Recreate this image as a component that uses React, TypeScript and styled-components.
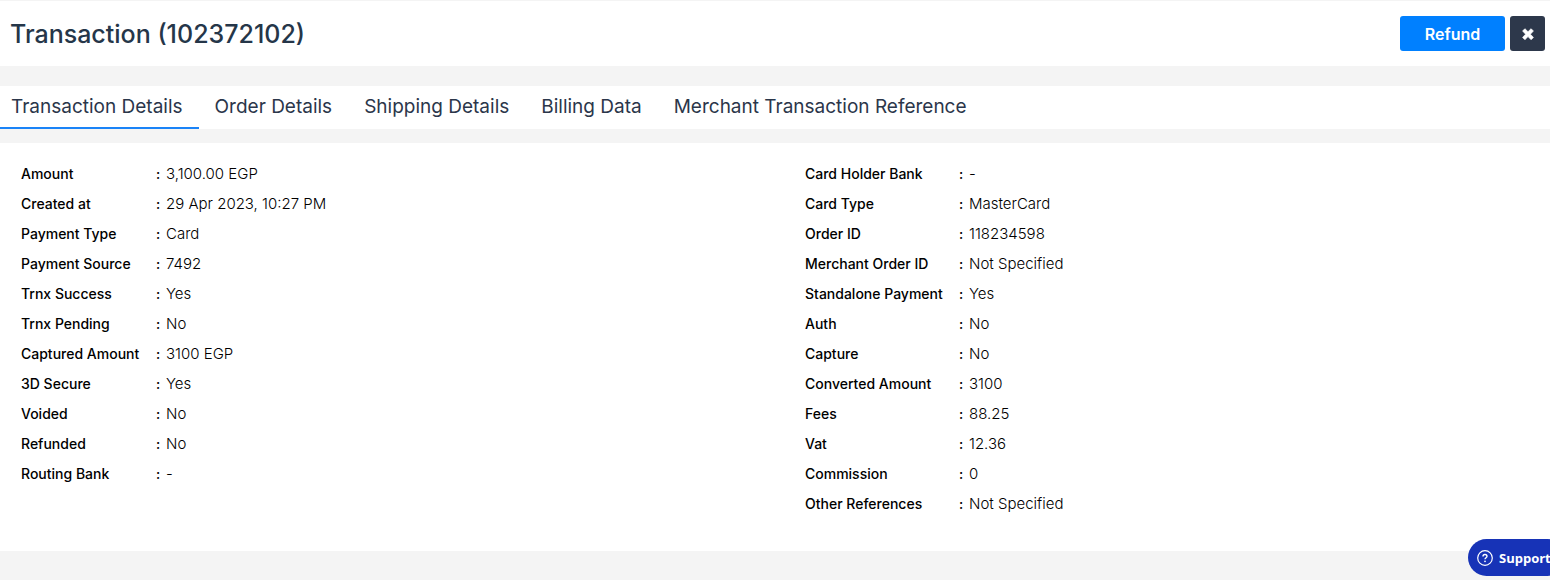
import React, { useState } from "react";
import styled, { createGlobalStyle } from "styled-components";

const GlobalStyle = createGlobalStyle`
  *, *::before, *::after { box-sizing: border-box; }
  body {
    margin: 0;
    min-height: 100vh;
    overflow-x: hidden;
    background: #f4f4f4;
    color: #000;
    font-family: Inter, "Liberation Sans", sans-serif;
  }
  button { font-family: inherit; cursor: pointer; }
`;

const Page = styled.div`
  padding-top: 1px;
`;

const Header = styled.header`
  display: flex;
  align-items: center;
  justify-content: space-between;
  height: 65px;
  padding: 0 5px 0 10px;
  background: #fff;
`;

const Title = styled.h1`
  margin: 0;
  color: #253649;
  font-size: 25px;
  font-weight: 500;
  line-height: 32px;
`;

const Actions = styled.div`
  display: flex;
  gap: 5px;
`;

const ActionButton = styled.button<{ $tone: string; $width: number }>`
  display: flex;
  align-items: center;
  justify-content: center;
  width: ${(p) => p.$width}px;
  height: 35px;
  padding: 0;
  border: 0;
  border-radius: 3px;
  background: ${(p) => p.$tone};
  color: #fff;
  font-size: 16px;
  font-weight: 600;
  line-height: 24px;
`;

const Tabs = styled.div`
  display: flex;
  height: 43px;
  margin-top: 20px;
  background: #fff;
`;

const Tab = styled.button<{ $active: boolean }>`
  padding: 0 16px;
  border: 0;
  border-bottom: 2px solid ${(p) => (p.$active ? "#1a83f7" : "transparent")};
  background: transparent;
  color: #2b364a;
  font-size: 19px;
  font-weight: 400;
  line-height: 24px;
  white-space: nowrap;

  &:first-child { padding-left: 11px; }
`;

const Panel = styled.main`
  display: grid;
  grid-template-columns: 1fr 1fr;
  align-items: start;
  column-gap: 60px;
  margin-top: 14px;
  padding: 16px 21px 32px;
  background: #fff;
`;

const DetailTable = styled.table`
  border-collapse: collapse;
  font-size: 15px;
  line-height: 20px;
  text-align: left;
`;

const Label = styled.th<{ $width: number }>`
  width: ${(p) => p.$width}px;
  height: 30px;
  padding: 0;
  font-size: 14px;
  font-weight: 500;
  white-space: nowrap;
`;

const Colon = styled.td`
  width: 10px;
  padding: 0;
  font-size: 14px;
  font-weight: 500;
`;

const Value = styled.td`
  padding: 0;
  font-weight: 300;
`;

const SupportButton = styled.button`
  position: fixed;
  right: -16px;
  bottom: 4px;
  display: flex;
  align-items: center;
  gap: 6px;
  width: 98px;
  height: 37px;
  padding: 0 0 0 9px;
  border: 0;
  border-radius: 19px;
  background: #1733b7;
  color: #fff;
  && { font-family: "Open Sans", "Noto Sans", sans-serif; }
  font-size: 13px;
  font-weight: 700;
  line-height: 20px;
`;

type Row = [string, string];

const paymentRows: Row[] = [
  ["Amount", "3,100.00 EGP"],
  ["Created at", "29 Apr 2023, 10:27 PM"],
  ["Payment Type", "Card"],
  ["Payment Source", "7492"],
  ["Trnx Success", "Yes"],
  ["Trnx Pending", "No"],
  ["Captured Amount", "3100 EGP"],
  ["3D Secure", "Yes"],
  ["Voided", "No"],
  ["Refunded", "No"],
  ["Routing Bank", "-"],
];

const orderRows: Row[] = [
  ["Card Holder Bank", "-"],
  ["Card Type", "MasterCard"],
  ["Order ID", "118234598"],
  ["Merchant Order ID", "Not Specified"],
  ["Standalone Payment", "Yes"],
  ["Auth", "No"],
  ["Capture", "No"],
  ["Converted Amount", "3100"],
  ["Fees", "88.25"],
  ["Vat", "12.36"],
  ["Commission", "0"],
  ["Other References", "Not Specified"],
];

const tabs = [
  "Transaction Details",
  "Order Details",
  "Shipping Details",
  "Billing Data",
  "Merchant Transaction Reference",
];

function Details({ rows, labelWidth }: { rows: Row[]; labelWidth: number }) {
  return (
    <DetailTable>
      <tbody>
        {rows.map(([label, value]) => (
          <tr key={label}>
            <Label scope="row" $width={labelWidth}>{label}</Label>
            <Colon>:</Colon>
            <Value>{value}</Value>
          </tr>
        ))}
      </tbody>
    </DetailTable>
  );
}

function CloseIcon() {
  return (
    <svg width="12" height="12" viewBox="0 0 12 12" aria-hidden="true">
      <path
        d="M2.9 .7 6 3.7 9.1 .7 11.4 3 8.4 6.2 11.4 9.4 9.1 11.7 6 8.6 2.9 11.7 .6 9.4 3.6 6.2 .6 3Z"
        fill="#fff"
        stroke="#fff"
        strokeWidth=".7"
        strokeLinejoin="round"
      />
    </svg>
  );
}

function HelpIcon() {
  return (
    <svg width="16" height="16" viewBox="0 0 16 16" fill="none" stroke="#fff" aria-hidden="true">
      <circle cx="8" cy="8" r="7.3" strokeWidth="1.2" />
      <path d="M6 6.4C6 5.2 6.9 4.5 8 4.5s2 .7 2 1.8c0 1.4-2 1.5-2 3" strokeWidth="1.4" />
      <circle cx="8" cy="11.3" r=".9" fill="#fff" stroke="none" />
    </svg>
  );
}

export default function App() {
  const [active, setActive] = useState(tabs[0]);
  return (
    <>
      <GlobalStyle />
      <Page>
        <Header>
          <Title>Transaction (102372102)</Title>
          <Actions>
            <ActionButton type="button" $tone="#0080ff" $width={105}>Refund</ActionButton>
            <ActionButton type="button" $tone="#2d384b" $width={35} aria-label="Close">
              <CloseIcon />
            </ActionButton>
          </Actions>
        </Header>
        <Tabs role="tablist">
          {tabs.map((tab) => (
            <Tab
              key={tab}
              type="button"
              role="tab"
              aria-selected={tab === active}
              $active={tab === active}
              onClick={() => setActive(tab)}
            >
              {tab}
            </Tab>
          ))}
        </Tabs>
        <Panel>
          <Details rows={paymentRows} labelWidth={135} />
          <Details rows={orderRows} labelWidth={154} />
        </Panel>
        <SupportButton type="button">
          <HelpIcon />
          Support
        </SupportButton>
      </Page>
    </>
  );
}
